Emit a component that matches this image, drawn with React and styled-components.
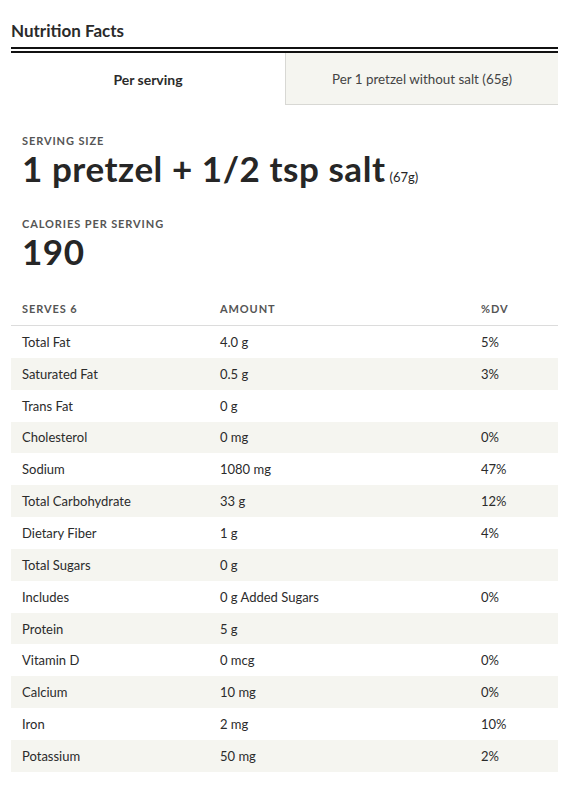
import React from 'react';
import styled, { createGlobalStyle } from 'styled-components';

const GlobalStyle = createGlobalStyle`
  body {
    margin: 0;
    background: #fff;
    font-family: 'Lato', 'Liberation Sans', Arial, sans-serif;
    color: #2b2b2b;
  }
`;

const Page = styled.div`
  width: 547px;
  padding: 20px 0 0 11px;
`;

const Heading = styled.h2`
  margin: 0;
  font-size: 17px;
  font-weight: 700;
  line-height: 22px;
  color: #2a2a2a;
`;

const DoubleRule = styled.div`
  margin-top: 5px;
  height: 2px;
  border-top: 2px solid #111;
  border-bottom: 2px solid #111;
`;

const Tabs = styled.div`
  display: grid;
  grid-template-columns: 274px 1fr;
  height: 52px;
`;

const Tab = styled.div`
  display: flex;
  align-items: center;
  justify-content: center;
  font-size: ${({ active }) => (active ? 14 : 13.4)}px;
  font-weight: ${({ active }) => (active ? 700 : 400)};
  color: ${({ active }) => (active ? '#2b2b2b' : '#444')};
  background: ${({ active }) => (active ? '#fff' : '#f5f5f0')};
  border-left: ${({ active }) => (active ? 'none' : '1px solid #d8d8d4')};
  border-bottom: ${({ active }) => (active ? 'none' : '1px solid #d8d8d4')};
`;

const Summary = styled.div`
  padding: 29px 11px 0;
`;

const Label = styled.div`
  font-size: 11px;
  font-weight: 700;
  letter-spacing: 0.9px;
  text-transform: uppercase;
  color: #555;
  line-height: 14px;
`;

const BigValue = styled.div`
  font-size: 35px;
  font-weight: 700;
  letter-spacing: 0.55px;
  line-height: 40px;
  color: #262626;
  margin-bottom: ${({ gap }) => gap || 0}px;
`;

const Small = styled.span`
  font-size: 13px;
  font-weight: 400;
  letter-spacing: 0;
  margin-left: 4px;
`;

const Table = styled.div`
  margin-top: 22px;
`;

const Row = styled.div`
  display: grid;
  grid-template-columns: 198px 261px 1fr;
  align-items: center;
  padding: 0 11px;
  height: ${({ header }) => (header ? '32px' : '31.85px')};
  background: ${({ shade }) => (shade ? '#f5f5f0' : '#fff')};
  border-bottom: ${({ header }) => (header ? '1px solid #dcdcdc' : 'none')};
  font-size: 13px;
  color: #2b2b2b;
`;

const HeadCell = styled.div`
  font-size: 11px;
  font-weight: 700;
  letter-spacing: 0.9px;
  color: #555;
  padding-bottom: 2px;
`;

const rows = [
  ['Total Fat', '4.0 g', '5%'],
  ['Saturated Fat', '0.5 g', '3%'],
  ['Trans Fat', '0 g', ''],
  ['Cholesterol', '0 mg', '0%'],
  ['Sodium', '1080 mg', '47%'],
  ['Total Carbohydrate', '33 g', '12%'],
  ['Dietary Fiber', '1 g', '4%'],
  ['Total Sugars', '0 g', ''],
  ['Includes', '0 g Added Sugars', '0%'],
  ['Protein', '5 g', ''],
  ['Vitamin D', '0 mcg', '0%'],
  ['Calcium', '10 mg', '0%'],
  ['Iron', '2 mg', '10%'],
  ['Potassium', '50 mg', '2%'],
];

export default function App() {
  return (
    <>
      <GlobalStyle />
      <Page>
        <Heading>Nutrition Facts</Heading>
        <DoubleRule />
        <Tabs>
          <Tab active>Per serving</Tab>
          <Tab>Per 1 pretzel without salt (65g)</Tab>
        </Tabs>
        <Summary>
          <Label>Serving size</Label>
          <BigValue gap={20}>
            1 pretzel + 1/2 tsp salt<Small>(67g)</Small>
          </BigValue>
          <Label>Calories per serving</Label>
          <BigValue>190</BigValue>
        </Summary>
        <Table>
          <Row header>
            <HeadCell>SERVES 6</HeadCell>
            <HeadCell>AMOUNT</HeadCell>
            <HeadCell>%DV</HeadCell>
          </Row>
          {rows.map(([name, amount, dv], i) => (
            <Row key={name} shade={i % 2 === 1}>
              <div>{name}</div>
              <div>{amount}</div>
              <div>{dv}</div>
            </Row>
          ))}
        </Table>
      </Page>
    </>
  );
}
